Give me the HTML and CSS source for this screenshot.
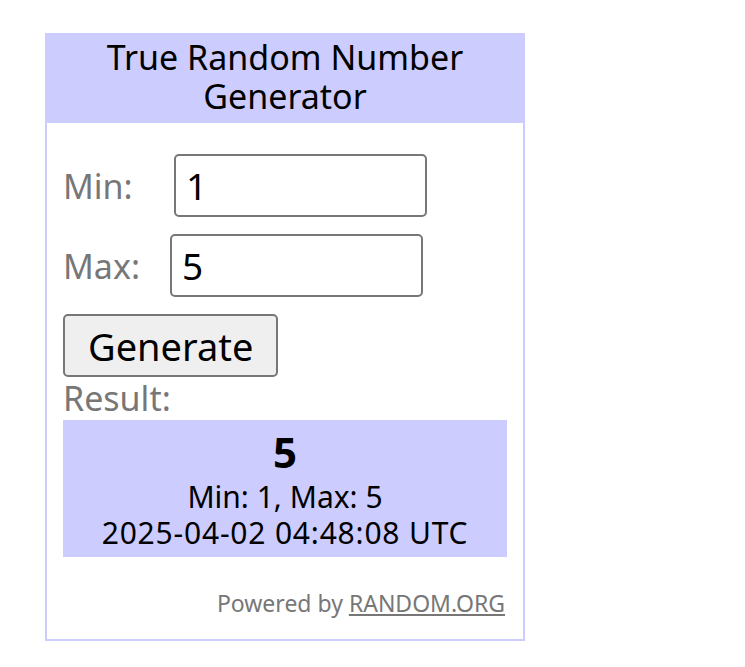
FILE: index.html
```html
<!DOCTYPE html>
<html lang="en">
<head>
    <meta charset="UTF-8">
    <meta name="viewport" content="width=device-width, initial-scale=1.0">
    <title>True Random Number Generator</title>
    <link rel="stylesheet" href="styles.css">
</head>
<body>

    <div class="widget">
        <div class="widget-title">True Random Number Generator</div>

        <div class="widget-body">
            <div class="field">
                <label for="min" class="min-label">Min:</label>
                <input type="text" id="min" class="num-input" value="1">
            </div>
            <div class="field">
                <label for="max" class="max-label">Max:</label>
                <input type="text" id="max" class="num-input" value="5">
            </div>

            <button class="gen-btn">Generate</button>

            <div class="result-label">Result:</div>
            <div class="result-box">
                <div class="result-num">5</div>
                <div class="result-line">Min: 1, Max: 5</div>
                <div class="result-line result-date">2025-04-02 04:48:08 UTC</div>
            </div>

            <div class="powered">Powered by <a href="#">RANDOM.ORG</a></div>
        </div>
    </div>

</body>
</html>
```

FILE: styles.css
```css
body {
    font-family: 'Noto Sans', sans-serif;
    margin: 0;
    padding: 33px 0 0 45px;
    background: white;
}

.widget {
    width: 476px;
    border: 2px solid #ccccff;
    border-top: none;
}

.widget-title {
    background: #ccccff;
    text-align: center;
    font-size: 34px;
    line-height: 39px;
    padding: 5px 10px 7px;
    color: #000;
}

.widget-body {
    padding: 31px 16px 20px;
}

.field {
    display: flex;
    align-items: center;
    margin-bottom: 17px;
}

.field label {
    font-size: 34px;
    color: #777;
}

.min-label {
    width: 111px;
}

.max-label {
    width: 107px;
}

.num-input {
    width: 253px;
    height: 63px;
    box-sizing: border-box;
    border: 2px solid #777;
    border-radius: 5px;
    font-family: 'Noto Sans', sans-serif;
    font-size: 37px;
    padding: 0 10px;
    color: #000;
}

.gen-btn {
    height: 63px;
    padding: 0 23px;
    background: #efefef;
    border: 2px solid #777;
    border-radius: 5px;
    font-family: 'Noto Sans', sans-serif;
    font-size: 38px;
    color: #000;
    display: block;
}

.result-label {
    font-size: 34px;
    line-height: 40px;
    color: #777;
    margin-top: 1px;
}

.result-box {
    background: #ccccff;
    text-align: center;
    padding: 5px 0 6px;
    margin-top: 2px;
}

.result-num {
    font-size: 42px;
    font-weight: bold;
    line-height: 54px;
}

.result-line {
    font-size: 30px;
    line-height: 36px;
}

.result-date {
    letter-spacing: 0.8px;
}

.powered {
    text-align: right;
    font-size: 23px;
    color: #777;
    margin-top: 30px;
    padding-right: 2px;
}

.powered a {
    color: #777;
}
```
